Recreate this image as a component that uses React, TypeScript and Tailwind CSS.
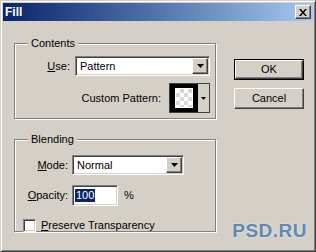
import React from 'react'

const font = { fontFamily: '"Liberation Sans", Arial, sans-serif' }

const raised =
  'border border-t-white border-l-white border-b-[#404040] border-r-[#404040] shadow-[inset_-1px_-1px_0_#808080] bg-[#d4d0c8]'
const sunken =
  'border border-t-[#808080] border-l-[#808080] border-b-white border-r-white shadow-[inset_1px_1px_0_#404040,inset_-1px_-1px_0_#d4d0c8]'

const Arrow = () => (
  <svg width="7" height="4" viewBox="0 0 7 4">
    <path d="M0 0h7L3.5 4z" fill="#000" />
  </svg>
)

const Select = ({ value, width }: { value: string; width: string }) => (
  <div className={`${sunken} ${width} h-[20px] bg-white flex items-center p-[1px]`}>
    <span className="flex-1 pl-[3px] text-[11px] text-black">{value}</span>
    <div className={`${raised} w-[16px] h-[16px] flex items-center justify-center`}>
      <Arrow />
    </div>
  </div>
)

const Group = ({ title, height, children }: { title: string; height: string; children: React.ReactNode }) => (
  <div
    className={`relative w-[202px] ${height} border border-[#808080] shadow-[1px_1px_0_#fff,inset_1px_1px_0_#fff]`}
  >
    <span className="absolute -top-[8px] left-[13px] px-[3px] bg-[#d4d0c8] text-[11px] leading-[14px] text-black">
      {title}
    </span>
    {children}
  </div>
)

const Button = ({ label, isDefault }: { label: string; isDefault?: boolean }) => (
  <div className={`w-[70px] h-[21px] ${isDefault ? 'border border-black' : ''}`}>
    <div className={`${raised} w-full h-full flex items-center justify-center text-[11px] text-black`}>
      {label}
    </div>
  </div>
)

export default function App() {
  return (
    <div
      style={font}
      className="relative w-[316px] h-[252px] bg-[#d4d0c8] border border-t-[#d4d0c8] border-l-[#d4d0c8] border-b-[#404040] border-r-[#404040] shadow-[inset_1px_1px_0_#fff,inset_-1px_-1px_0_#808080] p-[2px] flex flex-col overflow-hidden"
    >
      {/* title bar */}
      <div className="h-[18px] bg-gradient-to-r from-[#0a246a] to-[#a6caf0] flex items-center justify-between pl-[2px] pr-[2px]">
        <span className="text-white font-bold text-[12px]">Fill</span>
        <div className={`${raised} w-[16px] h-[14px] flex items-center justify-center`}>
          <svg width="8" height="7" viewBox="0 0 8 7">
            <path d="M0 0h2l2 2.5L6 0h2L5 3.5 8 7H6L4 4.5 2 7H0l3-3.5z" fill="#000" />
          </svg>
        </div>
      </div>

      {/* body */}
      <div className="flex pl-[11px] pt-[22px]">
        <div className="flex flex-col">
          <Group title="Contents" height="h-[76px]">
            <div className="flex flex-col items-end pr-[5px] pt-[12px] gap-[7px]">
              <div className="flex items-center gap-[5px]">
                <span className="text-[11px] text-black">
                  <u>U</u>se:
                </span>
                <Select value="Pattern" width="w-[135px]" />
              </div>
              <div className="flex items-center gap-[8px]">
                <span className="text-[11px] text-black">Custom Pattern:</span>
                <div className="w-[41px] h-[30px] border border-[#404040] bg-black flex">
                  <div className="w-[27px] h-full flex items-center justify-center">
                    <div className="w-[18px] h-[20px] border border-white bg-[conic-gradient(#d8d8d8_25%,#fff_0_50%,#d8d8d8_0_75%,#fff_0)] bg-[length:8px_8px]" />
                  </div>
                  <div className="flex-1 bg-[#d4d0c8] ml-[1px] flex items-center justify-center">
                    <svg width="5" height="3" viewBox="0 0 5 3">
                      <path d="M0 0h5L2.5 3z" fill="#000" />
                    </svg>
                  </div>
                </div>
              </div>
            </div>
          </Group>

          <div className="mt-[20px]">
            <Group title="Blending" height="h-[93px]">
              <div className="flex flex-col pt-[15px]">
                <div className="flex items-center gap-[4px]">
                  <span className="w-[53px] text-right text-[11px] text-black">
                    <u>M</u>ode:
                  </span>
                  <Select value="Normal" width="w-[112px]" />
                </div>
                <div className="flex items-center gap-[4px] mt-[10px]">
                  <span className="w-[53px] text-right text-[11px] text-black">
                    <u>O</u>pacity:
                  </span>
                  <div className={`${sunken} w-[46px] h-[21px] bg-white flex items-center pl-[2px]`}>
                    <span className="bg-[#0a246a] text-white text-[11px] leading-[13px] px-[1px]">100</span>
                  </div>
                  <span className="ml-[2px] text-[11px] text-black">%</span>
                </div>
                <div className="flex items-center gap-[5px] mt-[11px] pl-[8px]">
                  <div className={`${sunken} w-[13px] h-[13px] bg-white`} />
                  <span className="text-[11px] text-black">
                    <u>P</u>reserve Transparency
                  </span>
                </div>
              </div>
            </Group>
          </div>
        </div>

        <div className="flex flex-col ml-[18px] pt-[16px] gap-[8px]">
          <Button label="OK" isDefault />
          <Button label="Cancel" />
        </div>
      </div>

      <span
        className="absolute right-[8px] bottom-[6px] text-[19px] font-bold tracking-[0.5px] text-[#6388b0] [text-shadow:0_0_2px_#e8eef4]"
      >
        PSD.RU
      </span>
    </div>
  )
}
